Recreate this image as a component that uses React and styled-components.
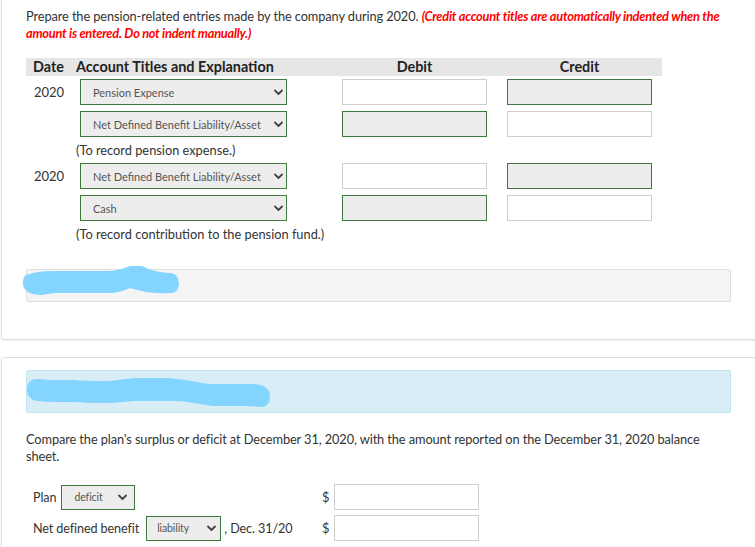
import React from "react";
import styled, { createGlobalStyle } from "styled-components";

const Global = createGlobalStyle`
  html, body { margin: 0; padding: 0; background: #fff; overflow: hidden; }
  body { font-family: Lato, "Open Sans", Arial, sans-serif; color: #333; }
`;

const Page = styled.div`
  width: 775px;
  padding-left: 1px;
  margin-top: -3px;
`;

const Card = styled.div`
  border: 1px solid #dcdcdc;
  border-radius: 3px;
  background: #fff;
  box-shadow: 0 1px 2px rgba(0,0,0,0.06);
  padding: ${p => p.$pad || "10px 0 37px 24px"};
  margin-bottom: ${p => p.$mb || "0"};
`;

const Prompt = styled.p`
  margin: 0;
  font-size: 12.8px;
  line-height: 17px;
  width: 712px;
  letter-spacing: -0.1px;
`;

const Red = styled.span`
  color: #f00;
  font-weight: bold;
  font-style: italic;
  letter-spacing: -0.25px;
`;

const Table = styled.div`
  margin-top: 16px;
  width: 636px;
  display: grid;
  grid-template-columns: 50px 256px 165px 165px;
  row-gap: 6px;
  align-items: center;
`;

const Head = styled.div`
  background: #e6e6e6;
  height: 18px;
  line-height: 18px;
  font-weight: bold;
  font-size: 14.4px;
  color: #222;
  padding-left: ${p => p.$pl || "0"};
  text-align: ${p => p.$center ? "center" : "left"};
  margin-bottom: -3px;
`;

const DateCell = styled.div`
  font-size: 13px;
  padding-left: 8px;
`;

const Empty = styled.div``;

const SelectBox = styled.div`
  box-sizing: border-box;
  width: ${p => p.$w || "207px"};
  height: ${p => p.$h || "26px"};
  margin-left: ${p => p.$ml || "4px"};
  border: 1px solid #3d7a3d;
  background: #ededed;
  display: flex;
  align-items: center;
  justify-content: space-between;
  padding: 0 ${p => p.$pr || "5px"} 0 ${p => p.$pl || "12px"};
  font-size: ${p => p.$fs || "11px"};
  color: #555;
  white-space: nowrap;
`;

const Chevron = () => (
  <svg width="9" height="7" viewBox="0 0 9 7">
    <path d="M1 1.5 L4.5 5 L8 1.5" fill="none" stroke="#444" strokeWidth="1.8" strokeLinecap="round" strokeLinejoin="round" />
  </svg>
);

const Input = styled.div`
  box-sizing: border-box;
  width: 145px;
  height: 26px;
  justify-self: center;
  border: 1px solid ${p => p.$filled ? "#3d7a3d" : "#cfcfcf"};
  background: ${p => p.$filled ? "#ededed" : "#fff"};
`;

const Explain = styled.div`
  grid-column: 2 / 5;
  font-size: 12.8px;
  line-height: 14px;
  margin: 0;
`;

const Notice = styled.div`
  box-sizing: border-box;
  margin-top: ${p => p.$mt || "25px"};
  width: 705px;
  height: ${p => p.$h || "33px"};
  border: 1px solid ${p => p.$blue ? "#bfe6ef" : "#dedede"};
  border-radius: 2px;
  background: ${p => p.$blue ? "#d9edf6" : "#f4f4f4"};
  position: relative;
`;

const Blob = styled.svg`
  position: absolute;
  left: ${p => p.$left || "-5px"};
  top: ${p => p.$top || "-4px"};
`;

const Question = styled.p`
  margin: 18px 0 0;
  font-size: 12.8px;
  line-height: 17px;
  width: 700px;
  letter-spacing: -0.1px;
`;

const Form = styled.div`
  width: 453px;
  margin-top: 19px;
`;

const FormRow = styled.div`
  display: flex;
  align-items: center;
  height: 26px;
  margin-top: ${p => p.$mt || "0"};
  font-size: 12.6px;
  letter-spacing: -0.1px;
`;

const Label = styled.span`
  padding-left: ${p => p.$pl || "0"};
  white-space: nowrap;
`;

const Dollar = styled.span`
  margin-left: auto;
  width: 12px;
  font-size: 12.8px;
`;

const AmountInput = styled.div`
  box-sizing: border-box;
  width: 145px;
  height: 26px;
  border: 1px solid #cfcfcf;
  background: #fff;
`;

const Row = ({ date, account, debitFilled, creditFilled }) => (
  <>
    <DateCell>{date}</DateCell>
    <SelectBox $pr="3px">{account}<Chevron /></SelectBox>
    <Input $filled={debitFilled} />
    <Input $filled={creditFilled} />
  </>
);

export default function App() {
  return (
    <Page>
      <Global />
      <Card $mb="17px">
        <Prompt>
          Prepare the pension-related entries made by the company during 2020.{" "}
          <Red>(Credit account titles are automatically indented when the amount is entered. Do not indent manually.)</Red>
        </Prompt>
        <Table>
          <Head $pl="7px">Date</Head>
          <Head>Account Titles and Explanation</Head>
          <Head $center>Debit</Head>
          <Head $center>Credit</Head>
          <Row date="2020" account="Pension Expense" creditFilled />
          <Row date="" account="Net Defined Benefit Liability/Asset" debitFilled />
          <Empty />
          <Explain>(To record pension expense.)</Explain>
          <Row date="2020" account="Net Defined Benefit Liability/Asset" creditFilled />
          <Row date="" account="Cash" debitFilled />
          <Empty />
          <Explain>(To record contribution to the pension fund.)</Explain>
        </Table>
        <Notice $mt="28px">
          <Blob $left="-5px" $top="-4px" width="160" height="34" viewBox="0 0 160 34">
            <path d="M8 8 Q14 5 32 5 L86 5 Q96 5 108 0 Q120 -2 126 3 Q140 7 148 7 Q156 7 157 17 Q157 27 148 27 Q138 28 124 26 Q112 23 108 22 Q100 26 90 27 L34 27 Q24 28 20 29 Q2 29 1 18 Q0 8 8 8 Z" fill="#83d5ff" />
          </Blob>
        </Notice>
      </Card>
      <Card $pad="12px 0 40px 24px">
        <Notice $blue $h="43px" $mt="0">
          <Blob $left="0px" $top="7px" width="246" height="30" viewBox="0 0 246 30">
            <path d="M12 1 Q18 2 26 2 L48 2 Q56 3 70 3 L84 3 Q96 1 108 0 L140 0 Q156 1 170 4 Q178 6 186 6 L224 6 Q242 6 243 18 Q243 30 232 29 Q226 28 218 28 L186 28 Q176 27 168 25 Q156 23 146 23 L108 23 Q96 24 84 25 L62 25 Q54 24 46 24 L28 24 Q18 24 10 23 Q0 21 0 12 Q0 0 12 1 Z" fill="#83d5ff" />
          </Blob>
        </Notice>
        <Question>
          Compare the plan's surplus or deficit at December 31, 2020, with the amount reported on the December 31, 2020 balance sheet.
        </Question>
        <Form>
          <FormRow>
            <Label $pl="7px">Plan</Label>
            <SelectBox $w="74px" $h="25px" $ml="5px" $pl="12px" $pr="7px" $fs="10.5px">deficit<Chevron /></SelectBox>
            <Dollar>$</Dollar>
            <AmountInput />
          </FormRow>
          <FormRow $mt="5px">
            <Label $pl="7px">Net defined benefit</Label>
            <SelectBox $w="75px" $h="25px" $ml="7px" $pl="10px" $pr="4px" $fs="10.5px">liability<Chevron /></SelectBox>
            <Label>&nbsp;, Dec. 31/20</Label>
            <Dollar>$</Dollar>
            <AmountInput />
          </FormRow>
        </Form>
      </Card>
    </Page>
  );
}
